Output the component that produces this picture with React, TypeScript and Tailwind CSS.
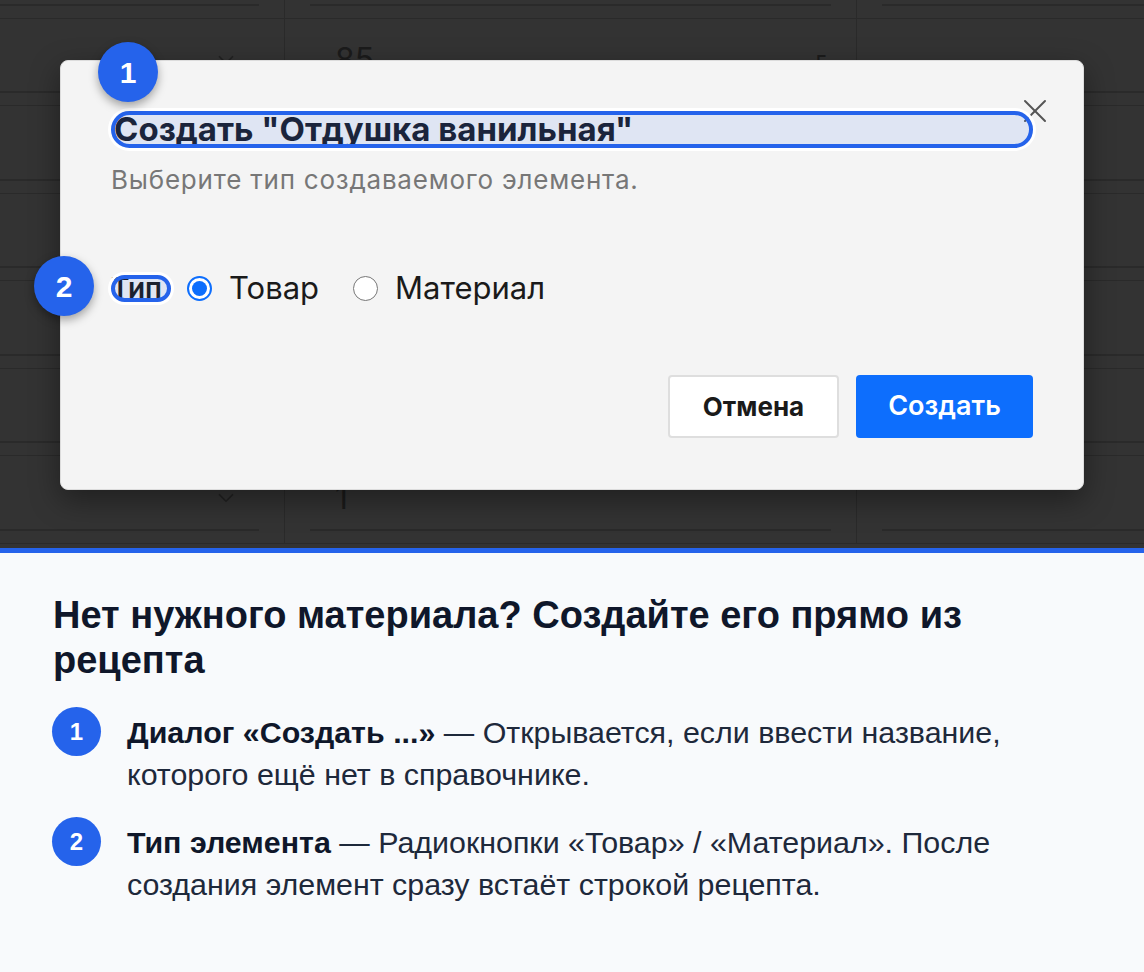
import React from "react";
import { ChevronDown, X } from "lucide-react";

const rows = [
  { qty: "", unit: "" },
  { qty: "85", unit: "г" },
  { qty: "40", unit: "г" },
  { qty: "12", unit: "г" },
  { qty: "3", unit: "г" },
  { qty: "5", unit: "г" },
  { qty: "1", unit: "" },
];

const Highlight = () => (
  <span className="pointer-events-none absolute inset-0 rounded-full border-4 border-[#2563eb] bg-[#2563eb]/10 ring-[3px] ring-white" />
);

const App: React.FC = () => {
  return (
    <div className="h-[972px] w-[1144px] overflow-hidden bg-[#f8fafc] font-['Liberation_Sans',Arial,sans-serif]">
      {/* dimmed page with the recipe table behind the dialog */}
      <div className="relative h-[548px] overflow-hidden bg-[#333333]">
        <div className="-mt-[69px]">
          {rows.map((r, i) => (
            <div
              key={i}
              className="grid h-[87.5px] grid-cols-[285px_572px_1fr] border-b border-[#2a2a2a]"
            >
              <div className="flex flex-col justify-end border-r border-[#2a2a2a] pb-[12px] pr-[25px]">
                <div className="flex h-[64px] items-center justify-end border-b-2 border-[#2a2a2a] pr-[20px] text-[#222]">
                  <ChevronDown size={26} strokeWidth={1.6} />
                </div>
              </div>
              <div className="flex flex-col justify-end border-r border-[#2a2a2a] px-[25px] pb-[12px]">
                <div className="flex h-[64px] items-center justify-between border-b-2 border-[#2a2a2a] pl-[25px] pr-[5px] font-['Inter',sans-serif] text-[32px] text-[#1b1b1b]">
                  <span>{r.qty}</span>
                  <span className="text-[24px]">{r.unit}</span>
                </div>
              </div>
              <div className="flex flex-col justify-end pb-[12px] pl-[25px]">
                <div className="h-[64px] border-b-2 border-[#2a2a2a]" />
              </div>
            </div>
          ))}
        </div>

        {/* dialog */}
        <div className="absolute left-[60px] top-[60px] z-10 w-[1024px] rounded-lg border border-[#dcdcdc] bg-[#f4f4f4] px-[50px] pb-[51px] pt-[50px] font-['Inter',sans-serif] shadow-[0_10px_30px_rgba(0,0,0,0.4)]">
          <button className="absolute right-[28px] top-[30px] text-[#555]">
            <X size={40} strokeWidth={1.2} />
          </button>

          <div className="relative flex h-[37px] items-center">
            <h2 className="whitespace-nowrap pl-[3px] text-[33px] font-bold leading-none text-[#1a1d29]">
              Создать "Отдушка ванильная"
            </h2>
            <Highlight />
          </div>

          <p className="mt-[18px] text-[26px] leading-[28px] tracking-[0.03em] text-[#777]">
            Выберите тип создаваемого элемента.
          </p>

          <div className="mt-[78px] flex h-[32px] items-center text-[31px] text-[#1a1a1a]">
            <div className="relative flex h-[27px] w-[60px] items-center">
              <span className="font-semibold text-[28px]">Тип</span>
              <Highlight />
            </div>
            <span className="ml-[16px] flex h-[25px] w-[25px] shrink-0 items-center justify-center rounded-full border-2 border-[#0d6efd] bg-white">
              <span className="h-[15px] w-[15px] rounded-full bg-[#0d6efd]" />
            </span>
            <span className="ml-[17px]">Товар</span>
            <span className="ml-[34px] h-[25px] w-[25px] shrink-0 rounded-full border-[1.5px] border-[#777] bg-white" />
            <span className="ml-[17px]">Материал</span>
          </div>

          <div className="mt-[71px] flex justify-end gap-[17px]">
            <button className="h-[63px] w-[171px] rounded border-2 border-[#dedede] bg-white text-[26px] font-bold text-[#1a1a1a]">
              Отмена
            </button>
            <button className="h-[63px] w-[177px] rounded bg-[#0d6efd] text-[27px] font-semibold text-white">
              Создать
            </button>
          </div>
        </div>

        <div className="absolute left-[98px] top-[42px] z-20 flex h-[60px] w-[60px] items-center justify-center rounded-full bg-[#2563eb] text-[30px] font-bold text-white shadow-[0_4px_10px_rgba(0,0,0,0.35)]">
          1
        </div>
        <div className="absolute left-[34px] top-[256px] z-20 flex h-[60px] w-[60px] items-center justify-center rounded-full bg-[#2563eb] text-[30px] font-bold text-white shadow-[0_4px_10px_rgba(0,0,0,0.35)]">
          2
        </div>
      </div>

      {/* explanation */}
      <div className="border-t-[5px] border-[#2563eb] px-[53px] pt-[40px]">
        <h1 className="text-[38px] font-bold leading-[45px] text-[#0f172a]">
          Нет нужного материала? Создайте его прямо из рецепта
        </h1>
        <div className="-ml-[1px] mt-[28px] flex flex-col gap-[26px]">
          <div className="flex gap-[26px]">
            <div className="-mt-[4px] flex h-[49px] w-[49px] shrink-0 items-center justify-center rounded-full bg-[#2563eb] text-[24px] font-bold text-white">
              1
            </div>
            <p className="max-w-[964px] text-[30.4px] leading-[42px] text-[#1e293b]">
              <b className="text-[#0f172a]">Диалог «Создать ...»</b> — Открывается, если ввести
              название, которого ещё нет в справочнике.
            </p>
          </div>
          <div className="flex gap-[26px]">
            <div className="-mt-[4px] flex h-[49px] w-[49px] shrink-0 items-center justify-center rounded-full bg-[#2563eb] text-[24px] font-bold text-white">
              2
            </div>
            <p className="max-w-[964px] text-[30.4px] leading-[42px] text-[#1e293b]">
              <b className="text-[#0f172a]">Тип элемента</b> — Радиокнопки «Товар» / «Материал».
              После создания элемент сразу встаёт строкой рецепта.
            </p>
          </div>
        </div>
      </div>
    </div>
  );
};

export default App;
